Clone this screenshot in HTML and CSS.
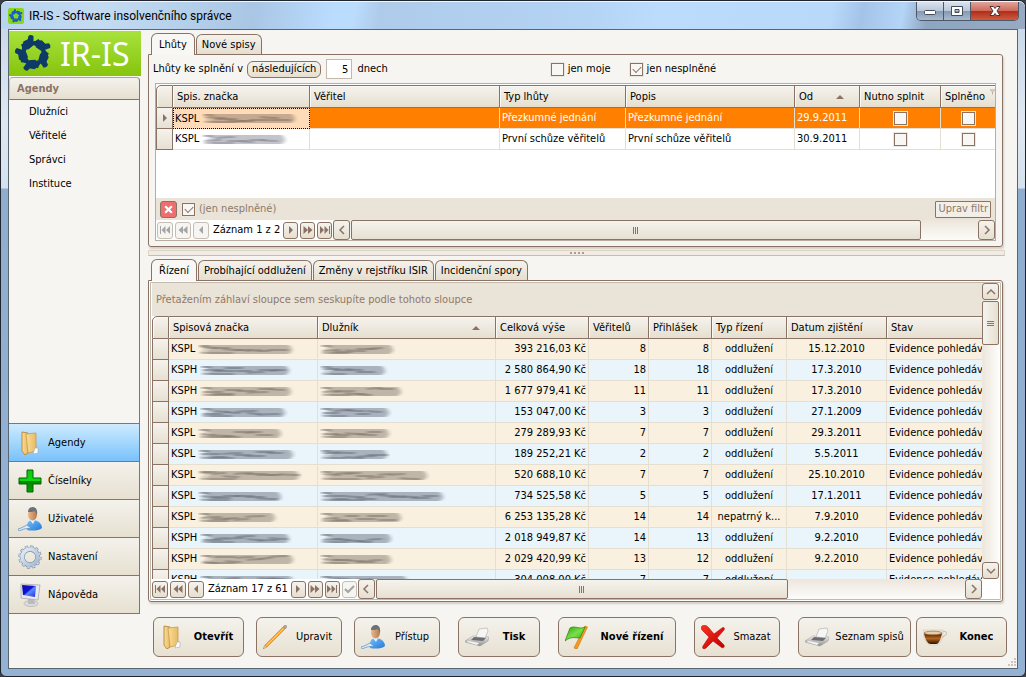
FILE: index.html
```html
<!DOCTYPE html>
<html lang="cs">

<head>
    <meta charset="UTF-8" />
    <meta name="viewport" content="width=device-width, initial-scale=1.0" />
    <title>IR-IS - Software insolvenčního správce</title>
    <link rel="stylesheet" href="styles.css">
</head>

<body>
    <svg class="defs" aria-hidden="true">
        <defs>
            <linearGradient id="g-folder"><stop offset="0" stop-color="#f9dd98" /><stop offset="1" stop-color="#e9bb62" /></linearGradient>
            <linearGradient id="g-blue" x2="1" y2="1"><stop offset="0" stop-color="#7cc0f8" /><stop offset="1" stop-color="#1f78d8" /></linearGradient>
            <linearGradient id="g-skin" x2="1"><stop offset="0" stop-color="#e9b98e" /><stop offset="1" stop-color="#b77a4c" /></linearGradient>
            <linearGradient id="g-green" x2="0" y2="1"><stop offset="0" stop-color="#12c312" /><stop offset=".5" stop-color="#0bdc0b" /><stop offset=".52" stop-color="#028602" /><stop offset="1" stop-color="#02a302" /></linearGradient>
            <linearGradient id="g-gear" x2="1" y2="1"><stop offset="0" stop-color="#e6eef6" /><stop offset="1" stop-color="#a3b9d0" /></linearGradient>
            <linearGradient id="g-screen" x2="1" y2="1"><stop offset="0" stop-color="#0a0aa0" /><stop offset=".45" stop-color="#1010d8" /><stop offset=".55" stop-color="#5c8cff" /><stop offset="1" stop-color="#1a2ae0" /></linearGradient>
            <linearGradient id="g-red" x2="1" y2="1"><stop offset="0" stop-color="#ff3020" /><stop offset="1" stop-color="#b80000" /></linearGradient>
            <linearGradient id="g-flag" x2="1" y2="1"><stop offset="0" stop-color="#2a9d0c" /><stop offset=".5" stop-color="#7be04a" /><stop offset="1" stop-color="#26a50a" /></linearGradient>
            <linearGradient id="g-metal" x2="0" y2="1"><stop offset="0" stop-color="#f2f2f2" /><stop offset="1" stop-color="#8e8e8e" /></linearGradient>
            <linearGradient id="g-coffee" x2="0" y2="1"><stop offset="0" stop-color="#3a1a06" /><stop offset=".5" stop-color="#b5651d" /><stop offset="1" stop-color="#2c1204" /></linearGradient>
            <filter id="soft" x="-5%" y="-30%" width="110%" height="160%"><feGaussianBlur stdDeviation="2 .7" /></filter>

            <symbol id="i-folder" viewBox="0 0 24 24">
                <path d="M4 1l6 1 0 20-3 2-3-4z" fill="url(#g-folder)" stroke="#b98e44" />
                <path d="M8 3l10-1v18l-8 2z" fill="url(#g-folder)" stroke="#c79b50" stroke-width=".8" />
                <path d="M17 17h3v5l-5 1z" fill="#fff" stroke="#aaa" stroke-width=".6" />
            </symbol>
            <symbol id="i-plus" viewBox="0 0 24 24">
                <path d="M9 1h6v8h8v6h-8v8H9v-8H1V9h8z" fill="url(#g-green)" stroke="#066306" />
            </symbol>
            <symbol id="i-user" viewBox="0 0 24 24">
                <path d="M9 23c-1-6 1-10 6-10s9 4 9 8c-3 3-11 3-15 2z" fill="url(#g-blue)" />
                <path d="M12 13l3 4 2-4z" fill="#e8f2ff" />
                <ellipse cx="14.500" cy="7.500" rx="4.500" ry="6" fill="url(#g-skin)" />
                <path d="M10 5c0-4 3-5 5-5s5 2 4 8l-2-4c-2 1-5 1-7 1z" fill="#6c7176" />
                <path d="M0 22l3-1 6-3 4 3-7 1-5 2z" fill="#d9e9fa" stroke="#5f8ec4" stroke-width=".7" />
            </symbol>
            <symbol id="i-gear" viewBox="0 0 24 24">
                <circle cx="12" cy="12" r="10.200" fill="none" stroke="#8296ab" stroke-width="3" stroke-dasharray="3 2.340" />
                <circle cx="12" cy="12" r="7.800" fill="none" stroke="#7b8ea3" stroke-width="5" />
                <circle cx="12" cy="12" r="7.800" fill="none" stroke="url(#g-gear)" stroke-width="3.800" />
                <circle cx="12" cy="12" r="10.200" fill="none" stroke="#c9d8e7" stroke-width="1.800" stroke-dasharray="2.200 3.140" stroke-dashoffset="-.4" />
            </symbol>
            <symbol id="i-monitor" viewBox="0 0 24 24">
                <ellipse cx="13" cy="20.500" rx="7" ry="3" fill="#dcdcdc" stroke="#aaa" stroke-width=".6" />
                <path d="M10 16h6l1 5h-7z" fill="#bbb" />
                <path d="M3 1l19 1-2 15-17-2z" fill="#e8e8ec" stroke="#a0a0a8" stroke-width=".7" />
                <path d="M4 2l14 1-1 11-12-2z" fill="url(#g-screen)" />
            </symbol>
            <symbol id="i-pencil" viewBox="0 0 24 24">
                <path d="M0 24l2-4 2 2z" fill="#e8cfa4" stroke="#806040" stroke-width=".4" />
                <path d="M2 20L20 2l2 2L4 22z" fill="#f8a83a" stroke="#d8862a" stroke-width=".7" />
                <path d="M3.500 20.500L20.500 3.500" stroke="#ffd38a" stroke-width=".8" />
                <path d="M20 2l1.500-1.500c2-.5 2.500.5 2 2L22 4z" fill="#b9a58e" stroke="#8d7a66" stroke-width=".5" />
            </symbol>
            <symbol id="i-printer" viewBox="0 0 24 24">
                <path d="M0 16l8-5 16 1-1 4-8 5-15-4z" fill="url(#g-metal)" stroke="#999" stroke-width=".5" />
                <path d="M11 12l3-8 8-1 1 3-3 7z" fill="#f6f6f6" stroke="#aaa" stroke-width=".6" />
                <path d="M9 12l12 1-3 3-12-1z" fill="#6e6e6e" />
                <path d="M3 16l11 2-2 2-10-3z" fill="#f4f4f4" />
            </symbol>
            <symbol id="i-flag" viewBox="0 0 24 24">
                <path d="M20 1l2.500 1L12 24l-3-1z" fill="#f49a1f" stroke="#c9720d" stroke-width=".6" />
                <path d="M5 3c5-3 9 2 15-1l-5 11c-5 0-9-2-15 3z" fill="url(#g-flag)" stroke="#1b8206" stroke-width=".7" />
            </symbol>
            <symbol id="i-cross" viewBox="0 0 24 24">
                <path d="M1 1c3-2 5 0 6 1l6 7 8-6c2-1 3 0 2 2l-7 8 7 7c1 2-1 4-3 2l-8-6-7 7c-3 2-4 0-3-2l6-9-7-7c-1-1-1-3 0-4z" fill="url(#g-red)" stroke="#c40000" stroke-width=".6" />
            </symbol>
            <symbol id="i-coffee" viewBox="0 0 24 24">
                <path d="M19 7c5-2 6 2 2 4l-4 4" fill="none" stroke="#c9c5bd" stroke-width="1.200" />
                <path d="M0 5h20c0 8-2 14-6 15H7C3 19 0 13 0 5z" fill="#eee7dd" stroke="#c9c0b2" stroke-width=".5" />
                <path d="M1 8h18c-1 6-3 11-6 11H8c-4 0-6-5-7-11z" fill="url(#g-coffee)" />
                <ellipse cx="10" cy="8" rx="9" ry="1.800" fill="#e8cda8" stroke="#8a5a30" stroke-width=".6" />
            </symbol>
            <path id="arm" d="M-5-17q2-2 5 0l0 5 8-1 4 4-3 4-9-3-5 4-6-1-1-4 6-2z" />
            <symbol id="i-star" viewBox="0 0 36 36">
                <g transform="translate(18 18)">
                    <use href="#arm" />
                    <use href="#arm" transform="rotate(72)" />
                    <use href="#arm" transform="rotate(144)" />
                    <use href="#arm" transform="rotate(216)" />
                    <use href="#arm" transform="rotate(288)" />
                </g>
            </symbol>
            <symbol id="i-first" viewBox="0 0 12 10"><path d="M1 1h1v8H1z M6.500 1v8L2.500 5z M11 1v8L7 5z" /></symbol>
            <symbol id="i-prevp" viewBox="0 0 12 10"><path d="M6 1v8L1.500 5z M10.500 1v8L6 5z" /></symbol>
            <symbol id="i-prev" viewBox="0 0 12 10"><path d="M8 1v8L4 5z" /></symbol>
            <symbol id="i-next" viewBox="0 0 12 10"><path d="M4 1v8l4-4z" /></symbol>
            <symbol id="i-nextp" viewBox="0 0 12 10"><path d="M1.500 1v8L6 5z M6 1v8l4.500-4z" /></symbol>
            <symbol id="i-last" viewBox="0 0 12 10"><path d="M10 1h1v8h-1z M1 1v8l4-4z M5.500 1v8l4-4z" /></symbol>
            <symbol id="i-check" viewBox="0 0 12 10"><path d="M2 5l3 3 6-6" fill="none" stroke="currentColor" stroke-width="2.200" /></symbol>
            <symbol id="i-left" viewBox="0 0 12 10"><path d="M8 1L4 5l4 4" fill="none" stroke="currentColor" stroke-width="1.500" /></symbol>
            <symbol id="i-right" viewBox="0 0 12 10"><path d="M4 1l4 4-4 4" fill="none" stroke="currentColor" stroke-width="1.500" /></symbol>
            <symbol id="i-up" viewBox="0 0 12 10"><path d="M2 7l4-4 4 4" fill="none" stroke="currentColor" stroke-width="1.500" /></symbol>
            <symbol id="i-down" viewBox="0 0 12 10"><path d="M2 3l4 4 4-4" fill="none" stroke="currentColor" stroke-width="1.500" /></symbol>
        </defs>
    </svg>

    <header class="titlebar">
        <svg class="app-icon"><use href="#i-star" /></svg>
        <span class="app-title">IR-IS - Software insolvenčního správce</span>
        <div class="win-buttons">
            <button class="win-min" aria-label="Minimalizovat"><svg viewBox="0 0 14 12"><rect x="1.500" y="5.500" width="11" height="4" rx="1" fill="#fff" stroke="#454d5c" /></svg></button>
            <button class="win-max" aria-label="Maximalizovat"><svg viewBox="0 0 14 12"><path d="M1.500 1.500h11v9h-11z M5 4.500h4v3H5z" fill="#fff" fill-rule="evenodd" stroke="#454d5c" /></svg></button>
            <button class="win-close" aria-label="Zavřít"><svg viewBox="0 0 14 12"><path d="M2 1.500h3.500L7 3.500l1.500-2H12L9 6l3 4.500H8.500L7 8.500l-1.500 2H2L5 6z" fill="#fff" stroke="#4a3236" /></svg></button>
        </div>
    </header>

    <div class="client">
        <aside class="sidebar">
            <div class="logo"><svg><use href="#i-star" /></svg><span>IR-IS</span></div>
            <h2>Agendy</h2>
            <nav class="links">
                <a href="#">Dlužníci</a>
                <a href="#">Věřitelé</a>
                <a href="#">Správci</a>
                <a href="#">Instituce</a>
            </nav>
            <div class="sections">
                <button class="active"><svg><use href="#i-folder" /></svg>Agendy</button>
                <button><svg><use href="#i-plus" /></svg>Číselníky</button>
                <button><svg><use href="#i-user" /></svg>Uživatelé</button>
                <button><svg><use href="#i-gear" /></svg>Nastavení</button>
                <button><svg><use href="#i-monitor" /></svg>Nápověda</button>
            </div>
        </aside>

        <main>
            <div class="tabs">
                <button class="tab selected">Lhůty</button>
                <button class="tab">Nové spisy</button>
            </div>
            <section class="panel deadlines">
                <div class="filter">
                    <label for="days">Lhůty ke splnění v</label>
                    <button class="pill">následujících</button>
                    <input type="text" id="days" value="5">
                    <label class="unit" for="days">dnech</label>
                    <label class="check"><input type="checkbox">jen moje</label>
                    <label class="check"><input type="checkbox" checked>jen nesplněné</label>
                </div>
                <div class="grid-box">
                    <div class="grid-view">
                        <table class="grid grid-deadlines">
                            <colgroup>
                                <col class="c-ind"><col class="c-spis"><col class="c-veritel"><col class="c-lhuta"><col class="c-popis"><col class="c-od"><col class="c-nutno"><col>
                            </colgroup>
                            <thead>
                                <tr>
                                    <th></th><th>Spis. značka</th><th>Věřitel</th><th>Typ lhůty</th><th>Popis</th><th class="sorted">Od</th><th>Nutno splnit</th>
                                    <th class="filtered">Splněno<svg viewBox="0 0 6 6"><path d="M0 .5h6M1 1l2 2v3M5 1L3 3" fill="none" stroke="#b3a497" /></svg></th>
                                </tr>
                            </thead>
                            <tbody>
                                <tr class="current">
                                    <td class="ind"></td><td class="focused">KSPL <span class="smudge" data-w="96" data-tone="#8b7768"></span></td><td></td><td>Přezkumné jednání</td><td>Přezkumné jednání</td><td>29.9.2011</td>
                                    <td class="mid"><input type="checkbox" aria-label="Nutno splnit"></td><td class="mid"><input type="checkbox" aria-label="Splněno"></td>
                                </tr>
                                <tr>
                                    <td class="ind"></td><td>KSPL <span class="smudge" data-w="86" data-tone="#888a96"></span></td><td></td><td>První schůze věřitelů</td><td>První schůze věřitelů</td><td>30.9.2011</td>
                                    <td class="mid"><input type="checkbox" aria-label="Nutno splnit"></td><td class="mid"><input type="checkbox" aria-label="Splněno"></td>
                                </tr>
                            </tbody>
                        </table>
                    </div>
                    <div class="filter-bar">
                        <button class="clear" aria-label="Zrušit filtr"><svg viewBox="0 0 10 10"><path d="M2 2l6 6M8 2L2 8" stroke="#fff" stroke-width="2" /></svg></button>
                        <label class="check"><input type="checkbox" checked>(jen nesplněné)</label>
                        <button class="edit-filter">Uprav filtr</button>
                    </div>
                    <div class="navigator">
                        <button class="off" aria-label="První"><svg><use href="#i-first" /></svg></button>
                        <button class="off" aria-label="Předchozí strana"><svg><use href="#i-prevp" /></svg></button>
                        <button class="off" aria-label="Předchozí"><svg><use href="#i-prev" /></svg></button>
                        <span class="record">Záznam 1 z 2</span>
                        <button aria-label="Další"><svg><use href="#i-next" /></svg></button>
                        <button aria-label="Další strana"><svg><use href="#i-nextp" /></svg></button>
                        <button aria-label="Poslední"><svg><use href="#i-last" /></svg></button>
                        <div class="hscroll">
                            <button aria-label="Vlevo"><svg><use href="#i-left" /></svg></button>
                            <div class="track"><div class="thumb thumb-wide"><i></i></div></div>
                            <button aria-label="Vpravo"><svg><use href="#i-right" /></svg></button>
                        </div>
                    </div>
                </div>
            </section>

            <div class="splitter"><i></i></div>

            <div class="tabs">
                <button class="tab selected">Řízení</button>
                <button class="tab">Probíhající oddlužení</button>
                <button class="tab">Změny v rejstříku ISIR</button>
                <button class="tab">Incidenční spory</button>
            </div>
            <section class="panel cases">
                <div class="cases-body">
                    <div class="cases-view">
                        <div class="group-panel">Přetažením záhlaví sloupce sem seskupíte podle tohoto sloupce</div>
                        <table class="grid grid-cases">
                            <colgroup>
                                <col class="c-ind"><col class="c-znacka"><col class="c-dluznik"><col class="c-vyse"><col class="c-verit"><col class="c-prihl"><col class="c-typ"><col class="c-datum"><col>
                            </colgroup>
                            <thead>
                                <tr><th></th><th>Spisová značka</th><th class="sorted">Dlužník</th><th>Celková výše</th><th>Věřitelů</th><th>Přihlášek</th><th>Typ řízení</th><th>Datum zjištění</th><th>Stav</th></tr>
                            </thead>
                            <tbody id="cases"></tbody>
                        </table>
                    </div>
                    <div class="vscroll">
                        <button aria-label="Nahoru"><svg><use href="#i-up" /></svg></button>
                        <div class="track"><div class="thumb"><i></i></div></div>
                        <button aria-label="Dolů"><svg><use href="#i-down" /></svg></button>
                    </div>
                </div>
                <div class="navigator">
                    <button aria-label="První"><svg><use href="#i-first" /></svg></button>
                    <button aria-label="Předchozí strana"><svg><use href="#i-prevp" /></svg></button>
                    <button aria-label="Předchozí"><svg><use href="#i-prev" /></svg></button>
                    <span class="record">Záznam 17 z 61</span>
                    <button aria-label="Další"><svg><use href="#i-next" /></svg></button>
                    <button aria-label="Další strana"><svg><use href="#i-nextp" /></svg></button>
                    <button aria-label="Poslední"><svg><use href="#i-last" /></svg></button>
                    <button class="off" aria-label="Potvrdit"><svg><use href="#i-check" /></svg></button>
                    <div class="hscroll">
                        <button aria-label="Vlevo"><svg><use href="#i-left" /></svg></button>
                        <div class="track"><div class="thumb thumb-mid"><i></i></div></div>
                        <button aria-label="Vpravo"><svg><use href="#i-right" /></svg></button>
                    </div>
                </div>
            </section>

            <footer class="actions">
                <button class="main-action w-open"><svg><use href="#i-folder" /></svg><span>Otevřít</span></button>
                <button class="w-edit"><svg><use href="#i-pencil" /></svg><span>Upravit</span></button>
                <button class="w-edit"><svg><use href="#i-user" /></svg><span>Přístup</span></button>
                <button class="main-action w-print apart"><svg><use href="#i-printer" /></svg><span>Tisk</span></button>
                <button class="main-action w-new apart"><svg><use href="#i-flag" /></svg><span>Nové řízení</span></button>
                <button class="w-edit apart"><svg><use href="#i-cross" /></svg><span>Smazat</span></button>
                <button class="w-list apart"><svg><use href="#i-printer" /></svg><span>Seznam spisů</span></button>
                <button class="main-action w-open close-by"><svg><use href="#i-coffee" /></svg><span>Konec</span></button>
            </footer>
        </main>
        <svg class="grip" viewBox="0 0 9 9"><path d="M7 1h2M4 4h2M7 4h2M1 7h2M4 7h2M7 7h2" stroke="#cbc5bb" stroke-width="2" /></svg>
    </div>

    <script src="script.js"></script>
</body>

</html>
```
FILE: styles.css
```css
* {
    box-sizing: border-box;
}

body {
    margin: 0;
    height: 100vh;
    padding: 0 7px 7px;
    display: flex;
    flex-direction: column;
    overflow: hidden;
    border: 1px solid #20242c;
    border-radius: 7px 7px 6px 6px;
    background: linear-gradient(#c3d5e8 0, #dfe8f1 120px, #d5e2ee 187px, #8fadcd 188px, #94b2d3 100%);
    font-family: "DejaVu Sans Condensed", "DejaVu Sans", sans-serif;
    font-size: 11px;
    line-height: 14px;
    color: #000;
}

html {
    background: #3a4048;
}

button,
input {
    margin: 0;
    padding: 0;
    font: inherit;
    color: inherit;
}

button {
    display: flex;
    align-items: center;
    justify-content: center;
    border: 1px solid #8a7365;
    border-radius: 3px;
    background: linear-gradient(#f5f3ee, #e7dfcf);
    white-space: nowrap;
}

svg {
    display: block;
    flex: none;
}

.defs {
    position: absolute;
    width: 0;
    height: 0;
}

/* title bar */
.titlebar {
    flex: none;
    display: flex;
    align-items: center;
    height: 28px;
    margin: 0 -7px;
    padding: 0 6px 0 7px;
    border-top: 1px solid #eef6ff;
    border-radius: 6px 6px 0 0;
    background: linear-gradient(100deg, #b7d3ee 0, #c4dcf2 100px, #a9c6e4 250px, #badcff 330px, #bbdcfd 350px, #aecbea 375px, #b4d4f5 580px, #bcdcfd 650px, #b9d9fa 820px, #a3c4e8 850px, #b5d5f7 890px, #8ea6c1 915px, #97aac1 100%);
}

.app-icon {
    width: 16px;
    height: 16px;
    padding: 1px;
    border-radius: 2px;
    background: #8cd51c;
    fill: #1460c8;
}

.app-title {
    margin-left: 5px;
    font-family: Roboto, "Open Sans", sans-serif;
    font-size: 12px;
    line-height: 16px;
}

.win-buttons {
    display: flex;
    align-self: flex-start;
    margin-left: auto;
    height: 19px;
    border: 1px solid #4d5868;
    border-top: 0;
    border-radius: 0 0 5px 5px;
    overflow: hidden;
}

.win-buttons button {
    width: 27px;
    border: 0;
    border-right: 1px solid #4d5868;
    border-radius: 0;
    background: linear-gradient(#dbe4ee 0, #b9c7d8 48%, #8398b2 50%, #a9bacd 100%);
}

.win-buttons .win-close {
    width: 47px;
    border-right: 0;
    background: linear-gradient(#e0a59b 0, #cf6b5a 48%, #b02c18 50%, #d05a40 100%);
}

.win-buttons svg {
    width: 14px;
    height: 12px;
}

.client {
    position: relative;
    flex: 1;
    min-height: 0;
    display: flex;
    border: 1px solid #59656f;
    background: #f6f5f2;
}

.grip {
    position: absolute;
    right: 1px;
    bottom: 1px;
    width: 9px;
    height: 9px;
}

/* sidebar */
.sidebar {
    flex: none;
    width: 132px;
    display: flex;
    flex-direction: column;
    padding: 1px 0 54px;
}

.logo {
    display: flex;
    align-items: center;
    height: 45px;
    padding-left: 6px;
    background: linear-gradient(#a8e23c, #86c40e);
    color: #fff;
    font-family: "Noto Sans", sans-serif;
    font-size: 32px;
    line-height: 44px;
}

.logo svg {
    width: 37px;
    height: 37px;
    margin-right: 8px;
    fill: #0d3a66;
}

.sidebar h2 {
    height: 23px;
    margin: 1px 1px 0 0;
    padding: 4px 7px;
    border: 1px solid #8a7365;
    border-top-color: #b3a497;
    border-left-color: #cfc6bb;
    border-radius: 4px 4px 0 0;
    background: linear-gradient(#f4f2ec, #e6dfd0);
    color: #8a7365;
    font-size: 11px;
    line-height: 14px;
}

.links {
    flex: 1;
    margin-right: 1px;
    padding-left: 20px;
    border-right: 1px solid #8a7365;
}

.links a {
    display: block;
    line-height: 24px;
    color: inherit;
    text-decoration: none;
}

.sections {
    margin-right: 1px;
    border: 1px solid #8a7365;
    border-width: 1px 1px 0 0;
}

.sections button {
    width: 100%;
    height: 38px;
    justify-content: flex-start;
    padding-left: 9px;
    border: 0;
    border-bottom: 1px solid #8a7365;
    border-radius: 0;
    background: linear-gradient(#f4f2ec, #e7e0d1);
}

.sections .active {
    background: linear-gradient(#cdebff 0, #a5d8fd 48%, #79c0fb 100%);
}

.sections svg {
    width: 24px;
    height: 24px;
    margin-right: 6px;
}

/* main column */
main {
    flex: 1;
    min-width: 0;
    display: flex;
    flex-direction: column;
    padding: 3px 14px 11px 7px;
}

.tabs {
    flex: none;
    display: flex;
    align-items: flex-end;
    gap: 1px;
    height: 21px;
    padding-left: 3px;
}

.tab {
    height: 20px;
    padding: 0 5px;
    border-bottom: 0;
    border-radius: 6px 6px 0 0;
    background: linear-gradient(#f4f2ec, #e6dfd0);
}

.tab.selected {
    position: relative;
    z-index: 1;
    height: 22px;
    margin-bottom: -1px;
    padding: 0 7px;
    background: #f8f7f4;
}

.panel {
    display: flex;
    flex-direction: column;
    border: 1px solid #8a7365;
    border-radius: 0 3px 3px 3px;
    box-shadow: 1px 2px 2px #d6cec4;
}

.deadlines {
    flex: none;
    height: 193px;
    padding: 0 6px 5px 4px;
}

.filter {
    display: flex;
    align-items: center;
    height: 28px;
    white-space: nowrap;
}

.pill {
    height: 17px;
    margin: 0 5px 0 4px;
    padding: 0 4px;
    border-radius: 6px;
}

.filter input[type="text"] {
    width: 26px;
    height: 20px;
    padding-right: 3px;
    border: 1px solid #c4b8aa;
    background: #fff;
    text-align: right;
}

.unit {
    margin: 0 163px 0 5px;
}

.check {
    display: flex;
    align-items: center;
    gap: 4px;
    margin-right: 19px;
}

input[type="checkbox"] {
    appearance: none;
    width: 13px;
    height: 13px;
    border: 1px solid #8a7365;
    background: #f8f7f4;
    box-shadow: 0 0 0 1px #ece8e0;
}

input[type="checkbox"]:checked::before {
    content: "";
    display: block;
    width: 7px;
    height: 4px;
    margin: 2px;
    border: solid #8a7365;
    border-width: 0 0 1px 1px;
    transform: rotate(-45deg);
}

.grid-box {
    flex: 1;
    min-height: 0;
    display: flex;
    flex-direction: column;
    margin-left: 2px;
    border: 1px solid #b9aca0;
    background: #fff;
}

.grid-view {
    flex: 1;
    min-height: 0;
    padding-top: 1px;
    overflow: hidden;
}

.grid {
    width: 100%;
    border-collapse: separate;
    border-spacing: 0;
    table-layout: fixed;
}

.grid th {
    height: 23px;
    padding: 0 4px;
    border: 1px solid #8a7365;
    border-left: 0;
    background: linear-gradient(#f5f3ee, #e6dfd0);
    box-shadow: inset 1px 1px #faf9f5;
    font-weight: normal;
    text-align: left;
    white-space: nowrap;
}

.grid th:first-child {
    border-left: 1px solid #8a7365;
    border-top-left-radius: 5px;
}

.grid th:last-child,
.grid td:last-child {
    border-right: 0;
}

.grid .sorted::after {
    content: "";
    float: right;
    margin: 5px 11px 0 0;
    border: solid transparent;
    border-width: 0 4px 4px;
    border-bottom-color: #8a7365;
}

.grid .filtered {
    position: relative;
}

.filtered svg {
    position: absolute;
    top: 3px;
    right: 0;
    width: 5px;
    height: 6px;
}

.grid td {
    height: 21px;
    padding: 0 2px;
    border: solid #e5dfd2;
    border-width: 0 1px 1px 0;
    overflow: hidden;
    white-space: nowrap;
}

.grid .ind {
    padding: 0;
    border: 1px solid #8a7365;
    border-top: 0;
    background: linear-gradient(#f5f3ee, #e7e0d2);
}

.grid .mid {
    text-align: center;
}

.grid .mid input {
    display: block;
    margin: 0 auto;
}

.grid .num {
    text-align: right;
}

.current td {
    background: #ff8000;
    color: #fff;
}

.current .ind::before {
    content: "";
    display: block;
    width: 4px;
    margin-left: 6px;
    border: solid transparent;
    border-width: 4px 0 4px 4px;
    border-left-color: #8a7365;
}

.current .focused {
    padding: 0 1px;
    border: 1px dotted #000;
    background: #ffdcb9;
    color: #000;
}

.c-ind { width: 17px; }
.c-spis { width: 137px; }
.c-veritel { width: 190px; }
.c-lhuta { width: 126px; }
.c-popis { width: 169px; }
.c-od { width: 65px; }
.c-nutno { width: 81px; }

.c-znacka { width: 149px; }
.c-dluznik { width: 178px; }
.c-vyse { width: 93px; }
.c-verit { width: 60px; }
.c-prihl { width: 63px; }
.c-typ { width: 75px; }
.c-datum { width: 100px; }

.smudge {
    display: inline-block;
    vertical-align: middle;
}

.filter-bar {
    flex: none;
    display: flex;
    align-items: center;
    height: 22px;
    padding: 0 4px;
    background: #eae3d7;
    color: #8f7969;
}

.clear {
    width: 17px;
    height: 17px;
    margin-right: 5px;
    background: #ee6f70;
}

.clear svg {
    width: 11px;
    height: 11px;
}

.edit-filter {
    height: 17px;
    margin-left: auto;
    padding: 0 2px;
    border-radius: 1px;
    background: #f3efe8;
}

.navigator {
    flex: none;
    display: flex;
    align-items: center;
    gap: 2px;
    height: 20px;
    padding-left: 1px;
    background: #fff;
}

.navigator button {
    flex: none;
    width: 15px;
    height: 17px;
}

.navigator > button:nth-of-type(-n+3) {
    width: 16px;
}

.navigator svg,
.vscroll svg {
    width: 12px;
    height: 10px;
    fill: #8a7365;
    color: #8a7365;
}

.navigator .off {
    border-color: #c6beb4;
    background: #f7f5f1;
}

.navigator .off svg {
    fill: #a5a5a5;
    color: #a5a5a5;
}

.record {
    padding: 0 1px 0 2px;
    white-space: nowrap;
}

.hscroll {
    flex: 1;
    display: flex;
    gap: 1px;
    height: 20px;
    margin-left: -1px;
    background: linear-gradient(#ece6dc, #fdfcfa);
}

.hscroll button {
    width: 17px;
    height: 20px;
}

.track {
    flex: 1;
}

.thumb {
    display: flex;
    align-items: center;
    justify-content: center;
    border: 1px solid #8a7365;
    border-radius: 2px;
    background: linear-gradient(#f5f3ee, #e7e0d1);
}

.hscroll .thumb {
    height: 20px;
}

.hscroll .thumb i {
    width: 5px;
    height: 7px;
    background: repeating-linear-gradient(90deg, #8a7365 0 1px, transparent 1px 2px);
}

.thumb-wide {
    width: 91%;
}

.thumb-mid {
    width: 70%;
}

.splitter {
    flex: none;
    display: flex;
    align-items: center;
    justify-content: center;
    height: 6px;
    margin: 3px -2px 3px 0;
    border: 1px solid #ddd5c8;
    border-bottom-color: #c8bcae;
    background: #f0ece4;
}

.splitter i {
    width: 14px;
    height: 2px;
    background: repeating-linear-gradient(90deg, #ad9e90 0 2px, transparent 2px 4px);
}

/* lower grid */
.cases {
    flex: 1;
    min-height: 0;
    padding: 2px;
    background: #fff;
    outline: 1px solid #c4b9ae;
    outline-offset: -3px;
}

.cases-body {
    flex: 1;
    min-height: 0;
    display: flex;
    padding: 0 0 0 1px;
}

.cases-view {
    flex: 1;
    min-width: 0;
    overflow: hidden;
}

.group-panel {
    height: 33px;
    padding: 10px 4px;
    background: #eae3d7;
    color: #8f7969;
}

.grid-cases tr:nth-child(odd) td {
    background: #faf0df;
}

.grid-cases tr:nth-child(even) td {
    background: #e9f4fb;
}

.grid-cases tr .ind.ind {
    background: linear-gradient(#f5f3ee, #e7e0d2);
}

.vscroll {
    flex: none;
    display: flex;
    flex-direction: column;
    gap: 1px;
    width: 17px;
    margin-right: 1px;
    background: linear-gradient(90deg, #ece6dc, #fdfcfa);
}

.vscroll button {
    width: 17px;
    height: 17px;
}

.vscroll .thumb {
    height: 44px;
    background: linear-gradient(90deg, #f5f3ee, #e7e0d1);
}

.vscroll .thumb i {
    width: 7px;
    height: 5px;
    background: repeating-linear-gradient(#8a7365 0 1px, transparent 1px 2px);
}

.cases .navigator {
    padding-right: 18px;
}

/* action buttons */
.actions {
    flex: none;
    display: flex;
    margin: 15px -4px 0 5px;
}

.actions button {
    flex: none;
    height: 40px;
    margin-left: 12px;
    padding-left: 6px;
    border-radius: 6px;
    background: linear-gradient(#f4f2ec, #e8e1d2);
}

.actions button:first-child {
    margin-left: 0;
}

.actions .apart {
    margin-left: 18px;
}

.actions .close-by {
    margin-left: 5px;
}

.actions svg {
    width: 24px;
    height: 24px;
}

.actions span {
    flex: 1;
    text-align: center;
}

.main-action {
    font-weight: bold;
}

.w-open { width: 91px; }
.w-edit { width: 86px; }
.w-print { width: 82px; }
.w-new { width: 118px; }
.w-list { width: 113px; }
```
FILE: script.js
```js
// [court, width of the hidden number, width of the hidden name, amount, creditors, claims, type, date]
const cases = [
    ['KSPL', 97, 76, '393 216,03', 8, 8, 'oddlužení', '15.12.2010'],
    ['KSPH', 92, 68, '2 580 864,90', 18, 18, 'oddlužení', '17.3.2010'],
    ['KSPH', 94, 84, '1 677 979,41', 11, 11, 'oddlužení', '17.3.2010'],
    ['KSPH', 88, 72, '153 047,00', 3, 3, 'oddlužení', '27.1.2009'],
    ['KSPL', 86, 72, '279 289,93', 7, 7, 'oddlužení', '29.3.2011'],
    ['KSPL', 98, 70, '189 252,21', 2, 2, 'oddlužení', '5.5.2011'],
    ['KSPL', 104, 110, '520 688,10', 7, 7, 'oddlužení', '25.10.2010'],
    ['KSPL', 86, 126, '734 525,58', 5, 5, 'oddlužení', '17.1.2011'],
    ['KSPL', 80, 84, '6 253 135,28', 14, 14, 'nepatrný k...', '7.9.2010'],
    ['KSPH', 92, 74, '2 018 949,87', 14, 13, 'oddlužení', '9.2.2010'],
    ['KSPH', 96, 74, '2 029 420,99', 13, 12, 'oddlužení', '9.2.2010'],
    ['KSPH', 96, 90, '304 008,00', 7, 7, 'oddlužení', ''],
];

let seed = 7;
function rnd() {
    seed = (seed * 16807) % 2147483647;
    return seed / 2147483647;
}

// smeared-out text: one soft band with a few darker strokes over it
function smudge(width, tone) {
    let strokes = '';
    for (let x = 3; x < width - 22; x += 11) {
        const y = 4 + Math.round(rnd() * 5);
        const dy = Math.round(rnd() * 2) - 1;
        strokes += `<path d="M${x} ${y}q8 ${dy} ${14 + Math.round(rnd() * 8)} ${dy}" />`;
    }
    return `<svg width="${width}" height="13" viewBox="0 0 ${width} 13">
        <g filter="url(#soft)" fill="none" stroke="${tone}">
            <path d="M2 2L${width - 6} 2Q${width} 7 ${width - 6} 11L12 11Q4 9 12 6z" fill="${tone}" fill-opacity=".5" stroke="none" />
            <path d="M1 3h10l-8 7h${Math.round(width / 3)}" />
            <g stroke-width="2" stroke-opacity=".6">${strokes}</g>
        </g>
    </svg>`;
}

document.getElementById('cases').innerHTML = cases.map((c, i) => {
    const tone = i % 2 ? '#6c7480' : '#857b70';
    return `<tr>
        <td class="ind"></td>
        <td>${c[0]} <span class="smudge">${smudge(c[1], tone)}</span></td>
        <td><span class="smudge">${smudge(c[2], tone)}</span></td>
        <td class="num">${c[3]} Kč</td>
        <td class="num">${c[4]}</td>
        <td class="num">${c[5]}</td>
        <td class="mid">${c[6]}</td>
        <td class="mid">${c[7]}</td>
        <td>Evidence pohledáve</td>
    </tr>`;
}).join('');

document.querySelectorAll('.smudge[data-w]').forEach(el => {
    el.innerHTML = smudge(+el.dataset.w, el.dataset.tone);
});
```
